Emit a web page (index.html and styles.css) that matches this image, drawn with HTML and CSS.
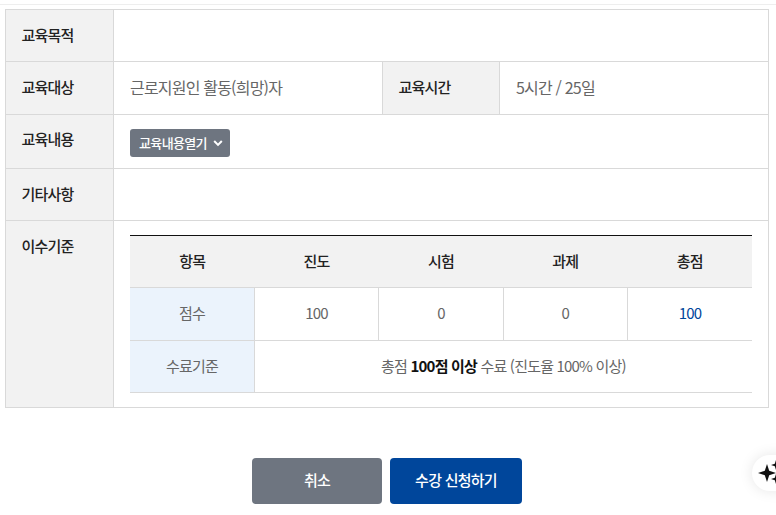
FILE: index.html
```html
<!DOCTYPE html>
<html lang="ko">
<head>
  <meta charset="UTF-8" />
  <title>교육과정 안내</title>
  <meta name="viewport" content="width=device-width, initial-scale=1.0">
  <link rel="stylesheet" href="styles.css">
</head>
<body>
  <div class="top-line"></div>
  <div class="content">
    <table class="info-table">
      <colgroup>
        <col class="col-label"><col class="col-value"><col class="col-label2"><col>
      </colgroup>
      <tbody>
        <tr class="row-a">
          <th>교육목적</th>
          <td colspan="3"></td>
        </tr>
        <tr class="row-b">
          <th>교육대상</th>
          <td>근로지원인 활동(희망)자</td>
          <th>교육시간</th>
          <td>5시간 / 25일</td>
        </tr>
        <tr class="row-c">
          <th>교육내용</th>
          <td colspan="3">
            <button class="open-btn">교육내용열기
              <svg width="10" height="10" viewBox="0 0 10 10"><path d="M1.2 3 5 6.9 8.8 3" fill="none" stroke="#fff" stroke-width="2"/></svg>
            </button>
          </td>
        </tr>
        <tr class="row-a">
          <th>기타사항</th>
          <td colspan="3"></td>
        </tr>
        <tr>
          <th class="top">이수기준</th>
          <td colspan="3" class="score-cell">
            <table class="score-table">
              <thead>
                <tr><th>항목</th><th>진도</th><th>시험</th><th>과제</th><th>총점</th></tr>
              </thead>
              <tbody>
                <tr class="score-row">
                  <td class="side">점수</td><td>100</td><td>0</td><td>0</td><td class="total">100</td>
                </tr>
                <tr class="limit-row">
                  <td class="side">수료기준</td>
                  <td colspan="4">총점 <b>100점 이상</b> 수료 (진도율 100% 이상)</td>
                </tr>
              </tbody>
            </table>
          </td>
        </tr>
      </tbody>
    </table>

    <div class="actions">
      <button class="btn btn-gray">취소</button>
      <button class="btn btn-blue">수강 신청하기</button>
    </div>
  </div>

  <div class="float-btn">
    <svg width="24" height="28" viewBox="0 0 24 28">
      <path d="M10 5 12.2 11.8 19 14 12.2 16.2 10 23 7.8 16.2 1 14 7.8 11.8Z" fill="#111"/>
      <path d="M19 1 20.2 4.8 24 6 20.2 7.2 19 11 17.8 7.2 14 6 17.8 4.8Z" fill="#111"/>
      <path d="M19 15 20.2 18.8 24 20 20.2 21.2 19 25 17.8 21.2 14 20 17.8 18.8Z" fill="#111"/>
    </svg>
  </div>
</body>
</html>
```

FILE: styles.css
```css
html, body {
  height: 515px;
  overflow: hidden;
}
body {
  font-family: "Noto Sans CJK KR", "Noto Sans", sans-serif;
  background: #fff;
  margin: 0;
  color: #666;
  font-size: 16px;
  letter-spacing: -0.05em;
  position: relative;
}
.top-line {
  height: 4px;
  border-bottom: 1px solid #eee;
}
.content {
  padding: 4px 7px 0 5px;
}
table {
  border-collapse: collapse;
  table-layout: fixed;
  width: 100%;
}
.info-table {
  border: 1px solid #d9d9d9;
}
.col-label { width: 108px; }
.col-value { width: 269px; }
.col-label2 { width: 117px; }
.info-table > tbody > tr > th,
.info-table > tbody > tr > td {
  border: 1px solid #d9d9d9;
  padding: 0 16px 2px;
  text-align: left;
}
.info-table > tbody > tr > th {
  background: #f2f2f2;
  color: #222;
  font-size: 15px;
  font-weight: 500;
  padding-left: 15.5px;
  padding-bottom: 4px;
}
.row-a { height: 52px; }
.row-b { height: 53px; }
.row-c { height: 54px; }
.info-table > tbody > .row-a > th {
  padding-bottom: 2px;
}
.info-table > tbody > .row-c > th {
  padding-bottom: 6px;
}
.info-table > tbody > tr > th.top {
  vertical-align: top;
  padding-top: 14px;
}
.info-table > tbody > .row-c > td {
  padding-bottom: 0;
}
.info-table > tbody > tr > td.score-cell {
  padding: 14px 16px;
}
.open-btn {
  display: flex;
  align-items: center;
  justify-content: center;
  gap: 6px;
  width: 100px;
  height: 28px;
  margin-top: 2px;
  padding: 0 0 0 2px;
  border: none;
  border-radius: 3px;
  background: #6e7580;
  color: #fff;
  font-family: inherit;
  font-size: 13px;
  font-weight: 500;
  letter-spacing: -0.05em;
}
.score-table {
  border-top: 1px solid #111;
  font-size: 15px;
}
.score-table th {
  height: 49px;
  padding: 0 0 2px;
  text-align: center;
  background: #f2f2f2;
  color: #222;
  font-weight: 500;
  border-bottom: 1px solid #d9d9d9;
}
.score-table td {
  height: 49px;
  padding: 0 0 2px;
  text-align: center;
  border-bottom: 1px solid #d9d9d9;
  border-left: 1px solid #d9d9d9;
}
.score-table .score-row td {
  height: 48px;
  padding-bottom: 4px;
}
.score-table td.side {
  background: #ebf3fc;
  border-left: none;
}
.score-table td.total {
  color: #00469b;
}
.score-table b {
  color: #111;
  font-weight: 700;
}
.actions {
  display: flex;
  justify-content: center;
  gap: 8px;
  margin-top: 50px;
}
.btn {
  height: 46px;
  border: none;
  border-radius: 4px;
  color: #fff;
  font-family: inherit;
  font-size: 15px;
  font-weight: 500;
  letter-spacing: -0.05em;
  padding: 0 0 3px;
}
.btn-gray {
  width: 130px;
  background: #6e7580;
}
.btn-blue {
  width: 132px;
  background: #00469b;
}
.float-btn {
  position: absolute;
  left: 752px;
  top: 455px;
  width: 48px;
  height: 36px;
  padding-left: 5px;
  box-sizing: border-box;
  display: flex;
  align-items: center;
  background: #fff;
  border-radius: 18px;
  box-shadow: 0 0 14px rgba(0,0,0,0.1);
}
```
